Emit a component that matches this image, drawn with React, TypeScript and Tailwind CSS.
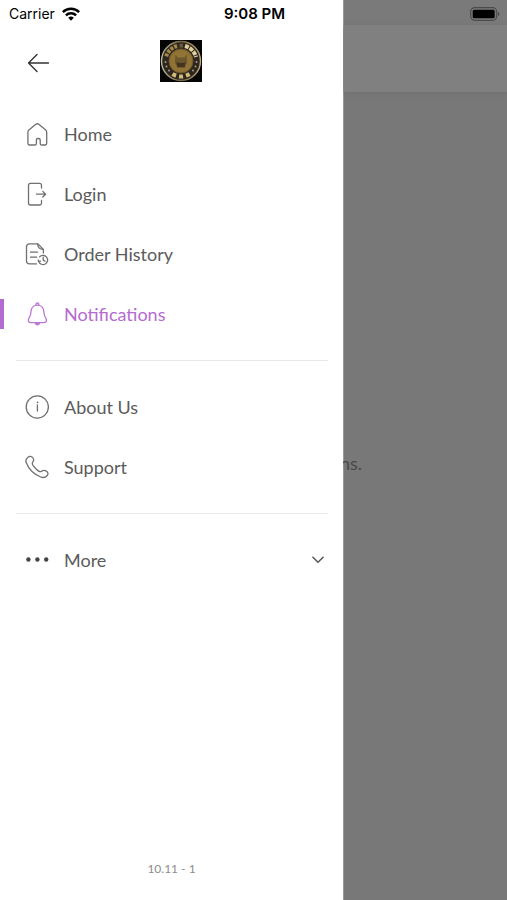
import React, { useState } from "react";

type IconProps = { children: React.ReactNode };

function Icon({ children }: IconProps) {
  return (
    <svg
      viewBox="0 0 24 24"
      className="size-6 shrink-0"
      fill="none"
      stroke="currentColor"
      strokeWidth="1.3"
      strokeLinecap="round"
      strokeLinejoin="round"
      aria-hidden="true"
    >
      {children}
    </svg>
  );
}

const HomeIcon = () => (
  <Icon>
    <path d="M2.900 10.200c0-.9.3-1.500 1-2.100l6.900-5.800c.9-.7 2.100-.7 3 0l6.900 5.800c.7.6 1 1.200 1 2.100v10.900c0 1.100-.7 1.900-1.800 1.900h-3.100c-1 0-1.600-.6-1.600-1.600v-3.300c0-1-.6-1.600-1.500-1.600h-.8c-.9 0-1.500.6-1.500 1.600v3.300c0 1-.6 1.600-1.600 1.600H4.700c-1.100 0-1.800-.8-1.800-1.900Z" />
  </Icon>
);

const LoginIcon = () => (
  <Icon>
    <path d="M16.500 6V3.200c0-1.100-.7-1.800-1.800-1.800H5.500c-1.200 0-2 .8-2 2V21c0 1.200.8 2 2 2h9.200c1.100 0 1.800-.7 1.800-1.800v-2.800" />
    <path d="M11.500 12.200h9M17.800 9.400l2.800 2.800-2.800 2.800" />
  </Icon>
);

const OrderIcon = () => (
  <Icon>
    <path d="M11.500 21.900H4.400c-1.800 0-2.900-1.100-2.900-2.900V4.800c0-1.800 1.100-2.900 2.900-2.900H13l5.400 5.600v3.600" />
    <path d="M12.800 2.100c-.4 2.700 1.900 5.500 5.400 5.300M5.500 10.200h7M5.500 15.200h6.200" />
    <path d="M14.600 14.900a4.600 4.600 0 1 1-.9 4.600M13.200 18l.6 1.600 1.700-.5" />
    <path d="M18.200 15.200v2.900l1.800 1.200" />
  </Icon>
);

const BellIcon = () => (
  <Icon>
    <path d="M11 3.200V2.300c0-.7.500-1.300 1.400-1.300s1.400.6 1.400 1.300v.9" />
    <path d="M12.400 3.100c-3.700 0-6.200 2.700-6.400 6.300-.2 3-.5 4.500-1.700 6.300-1.600 2.300-1.300 4.900 1.400 4.900h13.400c2.700 0 3-2.600 1.400-4.900-1.200-1.800-1.500-3.300-1.700-6.300-.2-3.600-2.700-6.300-6.400-6.300Z" />
    <path d="M10.400 21.500h4c-.4 1-1.100 1.400-2 1.400s-1.600-.4-2-1.400Z" fill="currentColor" />
  </Icon>
);

const InfoIcon = () => (
  <Icon>
    <circle cx="12.300" cy="12" r="11.100" />
    <path d="M12.400 10v6" />
    <circle cx="12.400" cy="7.300" r=".5" fill="currentColor" strokeWidth=".7" />
  </Icon>
);

const PhoneIcon = () => (
  <Icon>
    <path d="M3 2.200c1.700-1.500 3.900-1 5 .8.900 1.500.8 2.900-.2 4.100-.9 1.100-.8 1.900.2 3.300 1.500 2.200 3.100 3.900 5.300 5.500 1.400 1 2.300 1.100 3.300.3 1.200-1 2.700-1.200 4.400-.3 2.100 1.100 2.600 3.200 1 4.900-1.500 1.600-3.700 2.200-6.300 1.200C9.300 19.500 3.500 13.600 1.200 7.600.5 5.500 1.300 3.600 3 2.200Z" />
  </Icon>
);

const DotsIcon = () => (
  <Icon>
    <g fill="#444" stroke="none">
      <circle cx="3.400" cy="11.500" r="2.200" />
      <circle cx="12.400" cy="11.500" r="2.200" />
      <circle cx="21.200" cy="11.500" r="2.200" />
    </g>
  </Icon>
);

function Logo() {
  return (
    <svg viewBox="0 0 42 42" className="size-[42px]" role="img" aria-label="Logo">
      <defs>
        <radialGradient id="coin">
          <stop offset="0" stopColor="#97793a" />
          <stop offset="1" stopColor="#8d7032" />
        </radialGradient>
        <linearGradient id="rim" x1="0" x2="1">
          <stop offset="0" stopColor="#bbb69e" />
          <stop offset=".5" stopColor="#756542" />
          <stop offset="1" stopColor="#c0ad7c" />
        </linearGradient>
      </defs>
      <path fill="#050505" d="M0 0h42v42H0z" />
      <circle cx="21" cy="21" r="19.500" fill="#2c261f" stroke="url(#rim)" strokeWidth="1.400" />
      <g fill="none" strokeWidth="4">
        <path d="M6.200 16.400A15.500 15.500 0 0 1 18 5.800" stroke="#a28747" strokeDasharray="3 1.200" />
        <path d="M19.500 5.600h3.500" stroke="#665739" />
        <path d="M25 6A15.500 15.500 0 0 1 36 17" stroke="#ded09b" strokeDasharray="4 1" />
        <path d="M12.500 34A15.500 15.500 0 0 0 29.500 34" stroke="#d2bc79" strokeDasharray="4 3" />
      </g>
      <g fill="#a99b87">
        <circle cx="5.500" cy="22" r="1" />
        <circle cx="6.500" cy="26.500" r="1" />
        <circle cx="9" cy="30.500" r="1" />
        <circle cx="36.500" cy="22" r="1" />
        <circle cx="35.500" cy="26.500" r="1" />
        <circle cx="33" cy="30.500" r="1" />
      </g>
      <circle cx="21" cy="21" r="12" fill="url(#coin)" stroke="#6b552a" />
      <path d="m15.500 14.500 2 3h7l2-3 .8 7.500-2.500 6h-7.500l-2.500-6Z" fill="#6d572e" />
      <path d="m16.500 22 3 1h3l3-1-1 5h-7Z" fill="#42351c" />
    </svg>
  );
}

type ItemProps = { label: string; icon: React.ReactNode; active?: boolean };

function NavItem({ label, icon, active }: ItemProps) {
  return (
    <li>
      <a
        href="#"
        aria-current={active ? "page" : undefined}
        className={
          active
            ? "relative flex h-[60px] items-center gap-[15px] pl-[25px] text-[#b56bcf] before:absolute before:left-0 before:h-[30px] before:w-1 before:bg-[#b56bcf]"
            : "flex h-[60px] items-center gap-[15px] pl-[25px] text-[#5b5b5b]"
        }
      >
        <span className={active ? "opacity-90" : "text-[#707070]"}>{icon}</span>
        <span>{label}</span>
      </a>
    </li>
  );
}

function StatusBar() {
  return (
    <div className="absolute inset-x-0 top-0 z-20 grid h-7 grid-cols-3 items-center pr-[7px] pl-[9px] font-['Inter',sans-serif] text-black">
      <div className="flex items-center gap-[7px] text-sm">
        <span>Carrier</span>
        <svg viewBox="0 0 18 14" className="h-[14px] w-[18px]" fill="none" stroke="currentColor" strokeWidth="2.500" aria-hidden="true">
          <path d="M.9 5.200a11.500 11.500 0 0 1 16.200 0M3.900 8.300a7.200 7.200 0 0 1 10.200 0" />
          <path d="M6.200 10.800a4 4 0 0 1 5.600 0L9 13.700Z" fill="currentColor" stroke="none" />
        </svg>
      </div>
      <span className="text-center text-[15px] font-semibold">9:08 PM</span>
      <svg viewBox="0 0 31 14" className="h-[14px] w-[31px] justify-self-end" aria-hidden="true">
        <rect x="1.700" y=".7" width="26" height="12.600" rx="4" fill="none" stroke="#4b4b4b" strokeWidth="1.200" />
        <rect x="3.700" y="2.700" width="22" height="8.600" rx="1.500" fill="#000" />
        <path d="M29 5v4c2-.7 2-3.300 0-4Z" fill="#4b4b4b" />
      </svg>
    </div>
  );
}

export default function App() {
  const [open, setOpen] = useState(false);
  return (
    <div className="relative flex min-h-screen overflow-hidden bg-[#787878] font-['Lato',sans-serif] text-lg">
      <aside className="z-10 flex w-[343px] shrink-0 flex-col bg-white pt-10">
        <header className="grid grid-cols-3 items-center px-[26px]">
          <button type="button" aria-label="Back" className="w-6 pt-1 text-[#333]">
            <svg viewBox="0 0 24 24" className="size-6" fill="none" stroke="currentColor" strokeWidth="1.400" strokeLinecap="round" strokeLinejoin="round">
              <path d="M22.500 12H2.500M11 3.500 2.500 12l8.500 8.500" />
            </svg>
          </button>
          <div className="flex justify-center pl-[19px]">
            <Logo />
          </div>
        </header>
        <nav className="pt-[22px]">
          <ul>
            <NavItem label="Home" icon={<HomeIcon />} />
            <NavItem label="Login" icon={<LoginIcon />} />
            <NavItem label="Order History" icon={<OrderIcon />} />
            <NavItem label="Notifications" icon={<BellIcon />} active />
          </ul>
          <hr className="my-4 mr-[15px] ml-4 border-[#e8e8e8]" />
          <ul>
            <NavItem label="About Us" icon={<InfoIcon />} />
            <NavItem label="Support" icon={<PhoneIcon />} />
          </ul>
          <hr className="my-4 mr-[15px] ml-4 border-[#e8e8e8]" />
          <button
            type="button"
            aria-expanded={open}
            onClick={() => setOpen(!open)}
            className="flex h-[60px] w-full items-center gap-[15px] pr-[19px] pl-[25px] text-left text-[#5b5b5b]"
          >
            <DotsIcon />
            <span className="flex-1">More</span>
            <svg viewBox="0 0 12 8" className="h-2 w-3" fill="none" stroke="currentColor" strokeWidth="1.600" strokeLinecap="round" strokeLinejoin="round" aria-hidden="true">
              <path d="m.9 1.300 5.100 5 5.100-5" />
            </svg>
          </button>
        </nav>
        <footer className="mt-auto pb-[23px] text-center text-xs leading-4 text-[#8c8c8c]">10.11 - 1</footer>
      </aside>
      <main className="flex flex-1 flex-col border-l border-[#9a9a9a]">
        <div className="h-[25px] bg-[#7a7a7a]" />
        <div className="h-[67px] bg-[#808080] shadow-[0_1px_5px_#707070]" />
        <p className="-ml-1 pt-[357px] text-[#484848]">ns.</p>
      </main>
      <StatusBar />
    </div>
  );
}
